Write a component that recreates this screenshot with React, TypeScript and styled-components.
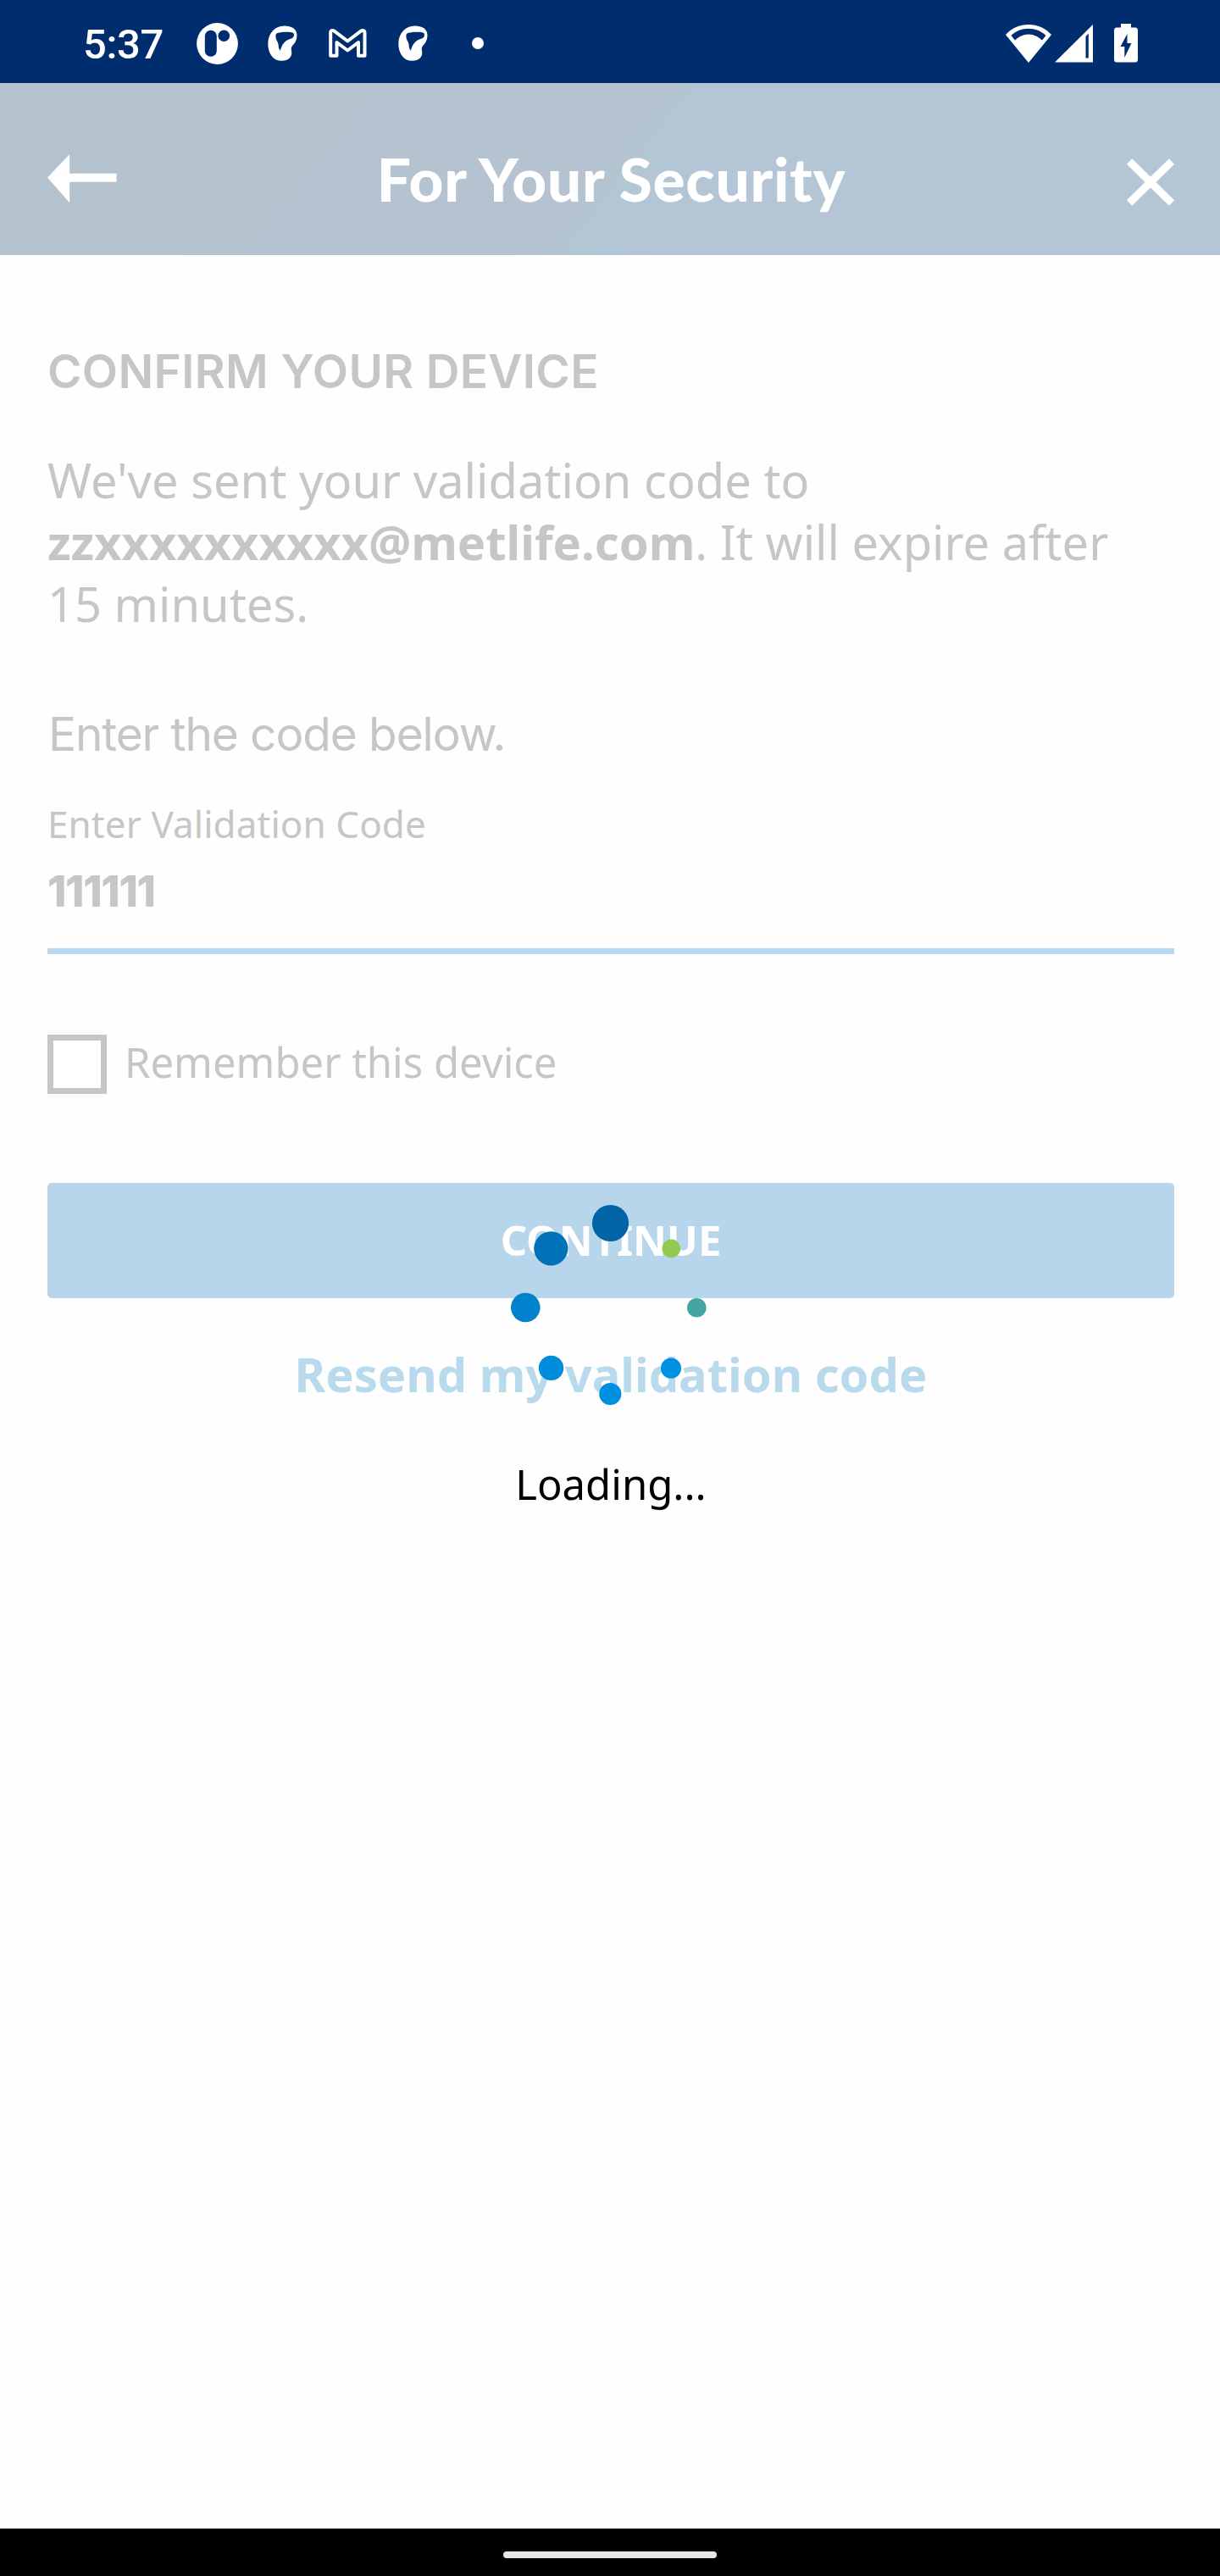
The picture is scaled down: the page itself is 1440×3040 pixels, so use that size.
import React from "react";
import styled, { createGlobalStyle } from "styled-components";

const brandFont = `Inter, Roboto, "Liberation Sans", sans-serif`;
const bodyFont = `"Noto Sans", "Open Sans", sans-serif`;

const GlobalStyle = createGlobalStyle`
  *, *::before, *::after { box-sizing: border-box; }
  body { margin: 0; background: #fefefe; }
  button, input { font: inherit; border: 0; padding: 0; background: none; }
`;

const Screen = styled.div`
  position: relative;
  display: flex;
  flex-direction: column;
  width: 1440px;
  height: 3040px;
  background: #fefefe;
  font-family: ${bodyFont};
  color: #c6c6c6;
  overflow: hidden;
`;

const StatusBar = styled.div`
  display: flex;
  justify-content: space-between;
  align-items: center;
  height: 98px;
  padding: 4px 97px 0 98px;
  background: #002d6e;
  color: #fff;
`;

const StatusGroup = styled.div`
  display: flex;
  align-items: center;
`;

const Clock = styled.span`
  width: 134px;
  font: 500 49px/56px Roboto, sans-serif;
  letter-spacing: -0.4px;
  white-space: nowrap;
  padding-top: 4px;
`;

const Glyph = styled.svg<{ $gap?: number }>`
  display: block;
  flex: none;
  margin-left: ${(p) => p.$gap ?? 0}px;
`;

const Header = styled.header`
  display: grid;
  grid-template-columns: 200px 1fr 200px;
  align-items: center;
  height: 203px;
  padding: 22px 53px 0 56px;
  background: linear-gradient(128deg, #b4c2ce 0%, #b4c3cf 49.6%, #b2c6d4 52%, #b4c5d6 60%, #b4c5d6 100%);
  color: #fff;
`;

const Title = styled.h1`
  margin: 0;
  font: 900 71px/84px Lato, sans-serif;
  letter-spacing: 0.75px;
  text-align: center;
  white-space: nowrap;
`;

const IconButton = styled.button<{ $end?: boolean }>`
  justify-self: ${(p) => (p.$end ? "end" : "start")};
  padding-top: ${(p) => (p.$end ? 9 : 0)}px;
  color: #fff;
`;

const Content = styled.main`
  flex: 1;
  display: flex;
  flex-direction: column;
  padding: 104px 54px 0 56px;
`;

const Heading = styled.h2`
  margin: 0;
  font: 600 55px/66px ${brandFont};
  letter-spacing: 0.35px;
  white-space: nowrap;
`;

const Message = styled.p`
  margin: 59px 0 0;
  font-size: 56px;
  line-height: 73px;
`;

const Line = styled.span`
  display: block;
  white-space: nowrap;
`;

const Prompt = styled.p`
  margin: 84px 0 0;
  padding-left: 1px;
  font: 400 55px/66px ${brandFont};
  letter-spacing: -1.12px;
`;

const Field = styled.label`
  display: flex;
  flex-direction: column;
  margin-top: 44px;
  padding-bottom: 37px;
  border-bottom: 7px solid #b8d9f0;
`;

const FieldLabel = styled.span`
  font-size: 44px;
  line-height: 58px;
  letter-spacing: 0.07px;
`;

const FieldValue = styled.span`
  margin-top: 21px;
  font: 800 51px/60px ${brandFont};
  letter-spacing: -1.4px;
`;

const RememberRow = styled.div`
  display: flex;
  align-items: center;
  gap: 21px;
  height: 70px;
  margin-top: 95px;
`;

const Checkbox = styled.span`
  width: 70px;
  height: 70px;
  border: 7px solid #c6c6c6;
  background: #fff;
`;

const RememberLabel = styled.span`
  font-size: 49px;
  line-height: 66px;
  padding-bottom: 6px;
`;

const ContinueButton = styled.button`
  height: 136px;
  margin-top: 105px;
  padding-bottom: 2px;
  border-radius: 5px;
  background: #b7d6ec;
  color: #fff;
  font: 700 49px/66px ${bodyFont};
`;

const ResendLink = styled.button`
  margin-top: 51px;
  color: #b9d9ec;
  font: 700 56px/76px ${bodyFont};
`;

const LoadingOverlay = styled.div`
  position: absolute;
  top: 1421px;
  left: 0;
  width: 100%;
  display: flex;
  flex-direction: column;
  align-items: center;
  gap: 58px;
  color: #000;
`;

const LoadingText = styled.span`
  padding-left: 2px;
  font-size: 49px;
  line-height: 64px;
`;

const NavigationBar = styled.footer`
  display: flex;
  justify-content: center;
  align-items: center;
  height: 56px;
  padding-top: 6px;
  background: #000;
`;

const HomeHandle = styled.span`
  width: 252px;
  height: 8px;
  border-radius: 4px;
  background: #e6e6e6;
`;

const spinnerDots = [
  { x: 120.5, y: 22.5, r: 21.6, fill: "#0064a6" },
  { x: 50.3, y: 52.4, r: 20.1, fill: "#0072b8" },
  { x: 20.3, y: 122, r: 17.3, fill: "#0082cc" },
  { x: 50.5, y: 193.4, r: 14.7, fill: "#008bdb" },
  { x: 120.3, y: 224, r: 13.1, fill: "#0090e0" },
  { x: 192, y: 193.7, r: 12.1, fill: "#0091e2" },
  { x: 222.3, y: 122.3, r: 11.3, fill: "#43a6a2" },
  { x: 192.3, y: 52.4, r: 10.8, fill: "#92c951" },
];

const Spinner = () => (
  <Glyph width={240} height={240} viewBox="0 0 240 240">
    {spinnerDots.map((d, i) => (
      <circle key={i} cx={d.x} cy={d.y} r={d.r} fill={d.fill} />
    ))}
  </Glyph>
);

const PunchIcon = () => (
  <Glyph width={49} height={49} viewBox="0 0 49 49">
    <circle cx="24.5" cy="24.5" r="24.4" fill="#fff" />
    <rect x="9.8" y="8.7" width="14" height="31" rx="6.8" fill="#002d6e" />
    <circle cx="32.3" cy="15.3" r="6.8" fill="#002d6e" />
  </Glyph>
);

const HeadIcon = ({ gap }: { gap: number }) => (
  <Glyph width={35} height={42} viewBox="0 0 35 42" $gap={gap}>
    <path
      fill="#fff"
      fillRule="evenodd"
      d="M19.5 0.5C9 0.5 0.5 9 0.3 21C0.2 34 7 41.8 16.5 41.8C24.5 41.8 29 37 28.2 31C27.5 27.5 27.5 25.5 30.5 22.5C33.8 19 34.7 14 34.4 10.5C34 4 28 0.5 19.5 0.5ZM10.5 9.5C14 7.5 28 7.2 30.5 9.2C31.8 12 30.5 14.8 27 15.8C21 17.5 16.8 22 14.8 29.8C13.3 28.5 12.8 26 12.6 23C12.3 19 9.8 18 9.5 14C9.3 11.5 9.5 10.2 10.5 9.5Z"
    />
  </Glyph>
);

const MailIcon = () => (
  <Glyph width={45} height={34} viewBox="0 0 45 34" $gap={37}>
    <path
      fill="none"
      stroke="#fff"
      strokeWidth="4"
      strokeLinejoin="round"
      d="M2.2 31.8V4.5C2.2 2 4.5 1.2 6.5 2.7L22.3 14.5L38 2.7C40 1.2 42.5 2 42.5 4.5V31.8H35V16L22.3 25.5L9.5 16V31.8Z"
    />
  </Glyph>
);

const WifiIcon = () => (
  <Glyph width={54} height={45} viewBox="0 0 54 45">
    <path
      fill="#fff"
      fillRule="evenodd"
      d="M27 45L0 12C7 4 16.5 0 27 0S47 4 54 12ZM6.5 13L11 18.5C15.5 14.5 20.5 11.5 27 11.5S38.5 14.5 43 18.5L47.5 13C42 7.5 35 4.7 27 4.7S12 7.5 6.5 13Z"
    />
  </Glyph>
);

const SignalIcon = () => (
  <Glyph width={45} height={45} viewBox="0 0 45 45" $gap={4}>
    <path fill="#fff" fillRule="evenodd" d="M0 44.5L45 0V44.5ZM36.5 14L39.8 10.5V39.5H36.5Z" />
  </Glyph>
);

const BatteryIcon = () => (
  <Glyph width={28} height={46} viewBox="0 0 28 46" $gap={25}>
    <path fill="#fff" d="M8 0H20V4.5H25Q28 4.5 28 8V42Q28 45.5 25 45.5H3Q0 45.5 0 42V8Q0 4.5 3 4.5H8Z" />
    <path fill="#002d6e" d="M15.5 12L7.5 27H12.3V40L20.5 23H15.5Z" />
  </Glyph>
);

export default function App() {
  return (
    <Screen>
      <GlobalStyle />
      <StatusBar>
        <StatusGroup>
          <Clock>5:37</Clock>
          <PunchIcon />
          <HeadIcon gap={35} />
          <MailIcon />
          <HeadIcon gap={37} />
          <Glyph width={14} height={14} viewBox="0 0 14 14" $gap={52}>
            <circle cx="7" cy="7" r="7" fill="#fff" />
          </Glyph>
        </StatusGroup>
        <StatusGroup>
          <WifiIcon />
          <SignalIcon />
          <BatteryIcon />
        </StatusGroup>
      </StatusBar>

      <Header>
        <IconButton aria-label="Back">
          <Glyph width={82} height={58} viewBox="0 0 82 58">
            <path fill="#fff" d="M0 27.5L26.2 0V22.7H81.5V32.7H26.2V57.5Z" />
          </Glyph>
        </IconButton>
        <Title>For Your Security</Title>
        <IconButton aria-label="Close" $end>
          <Glyph width={58} height={56} viewBox="0 0 58 56">
            <path stroke="#fff" strokeWidth="9" d="M4 3.5L54 52.5M54 3.5L4 52.5" />
          </Glyph>
        </IconButton>
      </Header>

      <Content>
        <Heading>CONFIRM YOUR DEVICE</Heading>
        <Message>
          <Line>We've sent your validation code to</Line>
          <Line>
            <b>zzxxxxxxxxxx@metlife.com</b>. It will expire after
          </Line>
          <Line>15 minutes.</Line>
        </Message>
        <Prompt>Enter the code below.</Prompt>
        <Field>
          <FieldLabel>Enter Validation Code</FieldLabel>
          <FieldValue>111111</FieldValue>
        </Field>
        <RememberRow>
          <Checkbox />
          <RememberLabel>Remember this device</RememberLabel>
        </RememberRow>
        <ContinueButton>CONTINUE</ContinueButton>
        <ResendLink>Resend my validation code</ResendLink>
      </Content>

      <LoadingOverlay>
        <Spinner />
        <LoadingText>Loading...</LoadingText>
      </LoadingOverlay>

      <NavigationBar>
        <HomeHandle />
      </NavigationBar>
    </Screen>
  );
}
